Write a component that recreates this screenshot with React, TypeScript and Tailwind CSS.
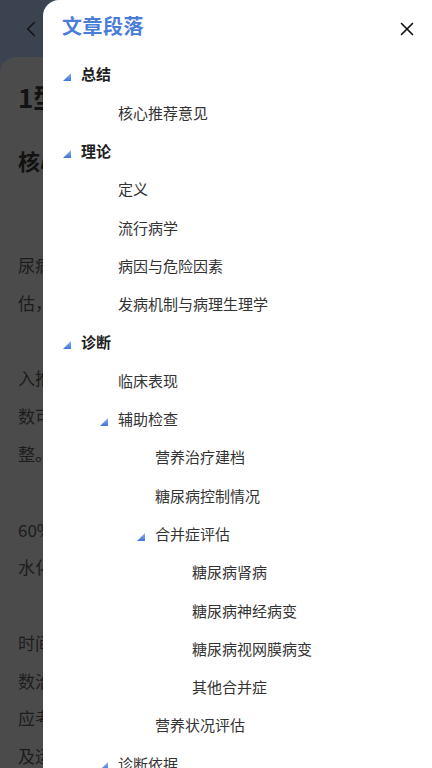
import { ChevronLeft, X } from "lucide-react";

type Node = { title: string; level: number; open?: boolean };

const outline: Node[] = [
  { title: "总结", level: 0, open: true },
  { title: "核心推荐意见", level: 1 },
  { title: "理论", level: 0, open: true },
  { title: "定义", level: 1 },
  { title: "流行病学", level: 1 },
  { title: "病因与危险因素", level: 1 },
  { title: "发病机制与病理生理学", level: 1 },
  { title: "诊断", level: 0, open: true },
  { title: "临床表现", level: 1 },
  { title: "辅助检查", level: 1, open: true },
  { title: "营养治疗建档", level: 2 },
  { title: "糖尿病控制情况", level: 2 },
  { title: "合并症评估", level: 2, open: true },
  { title: "糖尿病肾病", level: 3 },
  { title: "糖尿病神经病变", level: 3 },
  { title: "糖尿病视网膜病变", level: 3 },
  { title: "其他合并症", level: 3 },
  { title: "营养状况评估", level: 2 },
  { title: "诊断依据", level: 1, open: true },
];

// offsets inside the drawer (drawer starts at x=43)
const indent = ["pl-[38px]", "pl-[75px]", "pl-[112px]", "pl-[149px]"];
const arrowX = ["left-[20px]", "left-[57px]", "left-[94px]", "left-[131px]"];

const paragraphs = [
  ["尿病患者的营养治疗需要进行全面评", "估，并根据评估结果制定个体化方案"],
  ["入推荐意见中，证据等级与推荐强度", "数可根据患者实际情况进行相应的调", "整。"],
  ["60%以上的患者存在不同程度的营养", "水化合物摄入比例需要个体化设定"],
  ["时间与血糖控制目标密切相关，相关", "数治疗方案应结合患者生活方式", "应考虑合并症与并发症的影响", "及运动等因素综合判断"],
];

function Arrow() {
  return (
    <svg width="8" height="8" viewBox="0 0 8 8">
      <defs>
        <linearGradient id="tri" x1="0" y1="0" x2="0" y2="1">
          <stop offset="0" stopColor="#8fb4f2" />
          <stop offset="1" stopColor="#3f74d8" />
        </linearGradient>
      </defs>
      <path d="M8 0 L8 8 L0 8 Z" fill="url(#tri)" />
    </svg>
  );
}

export default function App() {
  return (
    <div
      className="relative w-full h-[768px] overflow-hidden bg-[#3b4351]"
      style={{ fontFamily: '"Noto Sans CJK SC", "Noto Sans", sans-serif' }}
    >
      {/* page behind the drawer (only the left strip is visible) */}
      <div className="h-[57px] flex items-center pl-[18px] text-[#151515]">
        <ChevronLeft className="w-[26px] h-[26px]" strokeWidth={1.6} />
      </div>
      <div className="h-[711px] bg-[#4b4b4b] rounded-tl-2xl pl-[18px] pt-[22px] text-[#1c1c1c]">
        <div className="w-[25px] overflow-hidden whitespace-nowrap">
          <div className="text-[26px] font-bold leading-[36px] text-[#121212]">1型糖尿病</div>
          <div className="mt-[30px] text-[22px] font-bold leading-[30px] text-[#121212]">核心推荐</div>
          <div className="mt-[71px] flex flex-col gap-[38px]">
            {paragraphs.map((p, i) => (
              <div key={i} className="flex flex-col">
                {p.map((line, j) => (
                  <div key={j} className="text-[17px] leading-[37.7px]">{line.slice(0, 3)}</div>
                ))}
              </div>
            ))}
          </div>
        </div>
      </div>

      {/* outline drawer */}
      <div className="absolute top-0 bottom-0 left-[43px] right-0 bg-white rounded-tl-2xl">
        <div className="h-[56px] flex items-center justify-between pl-[19px] pr-[14px]">
          <span className="text-[20px] font-bold text-[#4a7dd6] tracking-[0.5px] -mt-[4px]">文章段落</span>
          <X className="w-[22px] h-[22px] text-[#111] mt-[2px]" strokeWidth={1.8} />
        </div>
        <div className="flex flex-col">
          {outline.map((n, i) => (
            <div key={i} className={`relative h-[38.3px] flex items-center ${indent[n.level]}`}>
              {n.open && (
                <span className={`absolute top-[17px] ${arrowX[n.level]} flex`}>
                  <Arrow />
                </span>
              )}
              <span
                className={
                  n.level === 0
                    ? "text-[15px] font-bold text-[#1f1f1f] -mt-[1px]"
                    : "text-[15px] text-[#333] -mt-[1px]"
                }
              >
                {n.title}
              </span>
            </div>
          ))}
        </div>
      </div>
    </div>
  );
}
